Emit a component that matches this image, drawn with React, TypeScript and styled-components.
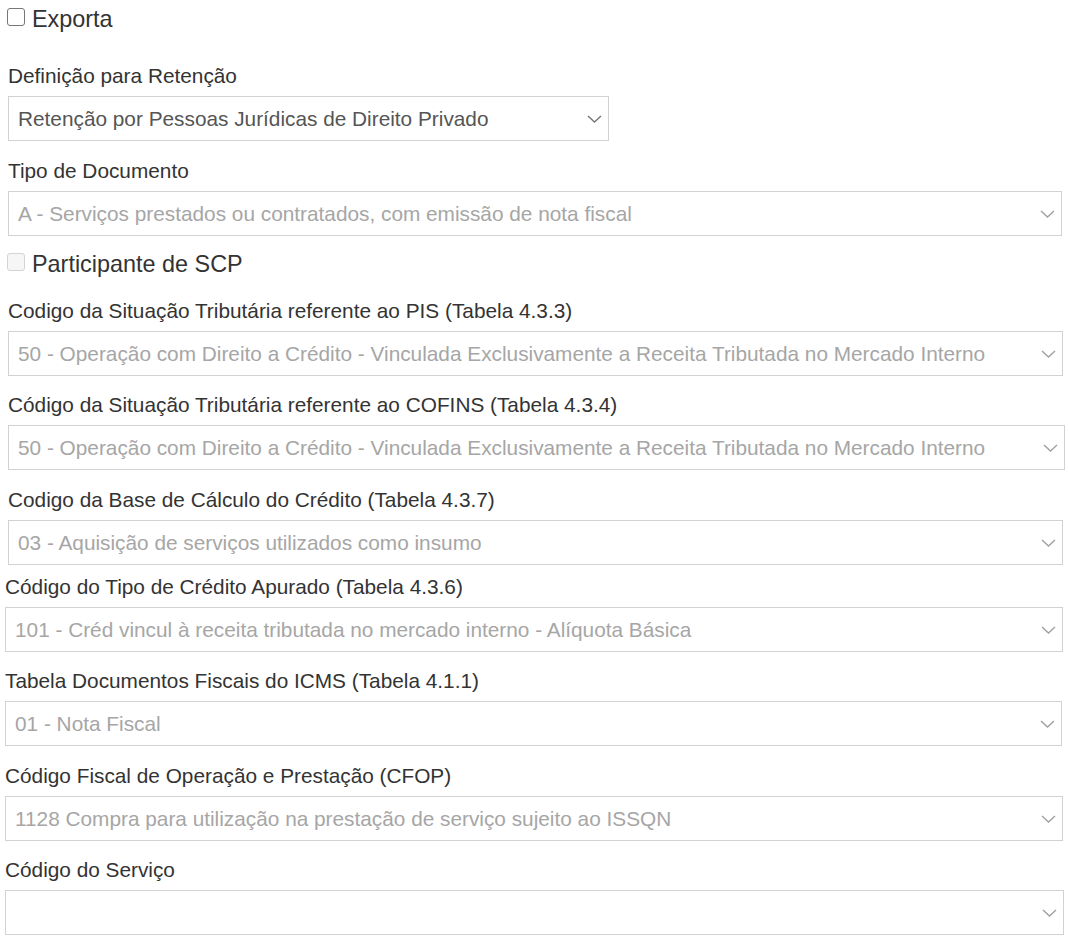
import React from "react";
import styled, { createGlobalStyle } from "styled-components";

const Global = createGlobalStyle`
  html, body { margin: 0; padding: 0; background: #fff; }
  body { font-family: "Liberation Sans", Arial, sans-serif; color: #333; }
`;

const Page = styled.div`
  padding: 5px 4px 0 8px;
  width: 1068px;
  box-sizing: border-box;
`;

const CheckRow = styled.label<{ $mt: number; $mb: number }>`
  display: flex;
  align-items: center;
  gap: 7px;
  margin: ${(p) => p.$mt}px 0 ${(p) => p.$mb}px -1px;
  font-size: 23.4px;
  line-height: 28px;
  color: #333;
`;

const Box = styled.input`
  appearance: none;
  margin: 0;
  width: 18px;
  height: 18px;
  border: 1px solid #767676;
  border-radius: 3px;
  background: #fff;
  box-sizing: border-box;
  flex: none;
  position: relative;
  top: -2px;
  &:disabled {
    border-color: #d3d3d3;
    background: #f6f6f6;
  }
`;

const Group = styled.div<{ $shift: number; $mb: number; $w: number }>`
  display: flex;
  flex-direction: column;
  margin-left: ${(p) => -p.$shift}px;
  margin-bottom: ${(p) => p.$mb}px;
  width: ${(p) => p.$w}px;
`;

const Label = styled.label`
  font-size: 20.8px;
  line-height: 23px;
  color: #333;
  margin-bottom: 9px;
`;

const SelectWrap = styled.div`
  position: relative;
  height: 45px;
`;

const Select = styled.select`
  appearance: none;
  width: 100%;
  height: 45px;
  box-sizing: border-box;
  border: 1px solid #d2d2d2;
  border-radius: 0;
  background: #fff;
  padding: 0 36px 0 9px;
  font-family: "Liberation Sans", Arial, sans-serif;
  font-size: 20.8px;
  color: #555;
  outline: none;
  &:disabled {
    color: #a6a6a6;
    opacity: 1;
    background: #fff;
  }
`;

const Chevron = styled.svg<{ $on: boolean }>`
  position: absolute;
  right: 7px;
  top: 50%;
  margin-top: -4px;
  width: 15px;
  height: 8px;
  pointer-events: none;
  stroke: ${(p) => (p.$on ? "#777" : "#a0a0a0")};
`;

type FieldProps = {
  label: string;
  value: string;
  w: number;
  shift?: number;
  mb?: number;
  disabled?: boolean;
};

const Field: React.FC<FieldProps> = ({ label, value, w, shift = 0, mb = 18, disabled = true }) => (
  <Group $shift={shift} $mb={mb} $w={w}>
    <Label>{label}</Label>
    <SelectWrap>
      <Select disabled={disabled} defaultValue={value}>
        <option value={value}>{value}</option>
      </Select>
      <Chevron $on={!disabled} viewBox="0 0 15 8" fill="none" strokeWidth="1.4">
        <path d="M1 1l6.5 6 6.5-6" />
      </Chevron>
    </SelectWrap>
  </Group>
);

export default function App() {
  return (
    <Page>
      <Global />
      <CheckRow $mt={0} $mb={31}>
        <Box type="checkbox" />
        Exporta
      </CheckRow>
      <Field
        label="Definição para Retenção"
        value="Retenção por Pessoas Jurídicas de Direito Privado"
        w={601}
        disabled={false}
      />
      <Field
        label="Tipo de Documento"
        value="A - Serviços prestados ou contratados, com emissão de nota fiscal"
        w={1054}
        mb={0}
      />
      <CheckRow $mt={14} $mb={21}>
        <Box type="checkbox" disabled />
        Participante de SCP
      </CheckRow>
      <Field
        label="Codigo da Situação Tributária referente ao PIS (Tabela 4.3.3)"
        value="50 - Operação com Direito a Crédito - Vinculada Exclusivamente a Receita Tributada no Mercado Interno"
        w={1055}
        mb={17}
      />
      <Field
        label="Código da Situação Tributária referente ao COFINS (Tabela 4.3.4)"
        value="50 - Operação com Direito a Crédito - Vinculada Exclusivamente a Receita Tributada no Mercado Interno"
        w={1057}
      />
      <Field
        label="Codigo da Base de Cálculo do Crédito (Tabela 4.3.7)"
        value="03 - Aquisição de serviços utilizados como insumo"
        w={1055}
        mb={10}
      />
      <Field
        label="Código do Tipo de Crédito Apurado (Tabela 4.3.6)"
        value="101 - Créd vincul à receita tributada no mercado interno - Alíquota Básica"
        w={1058}
        shift={3}
        mb={17}
      />
      <Field
        label="Tabela Documentos Fiscais do ICMS (Tabela 4.1.1)"
        value="01 - Nota Fiscal"
        w={1057}
        shift={3}
      />
      <Field
        label="Código Fiscal de Operação e Prestação (CFOP)"
        value="1128 Compra para utilização na prestação de serviço sujeito ao ISSQN"
        w={1058}
        shift={3}
        mb={17}
      />
      <Field label="Código do Serviço" value="" w={1059} shift={3} />
    </Page>
  );
}
